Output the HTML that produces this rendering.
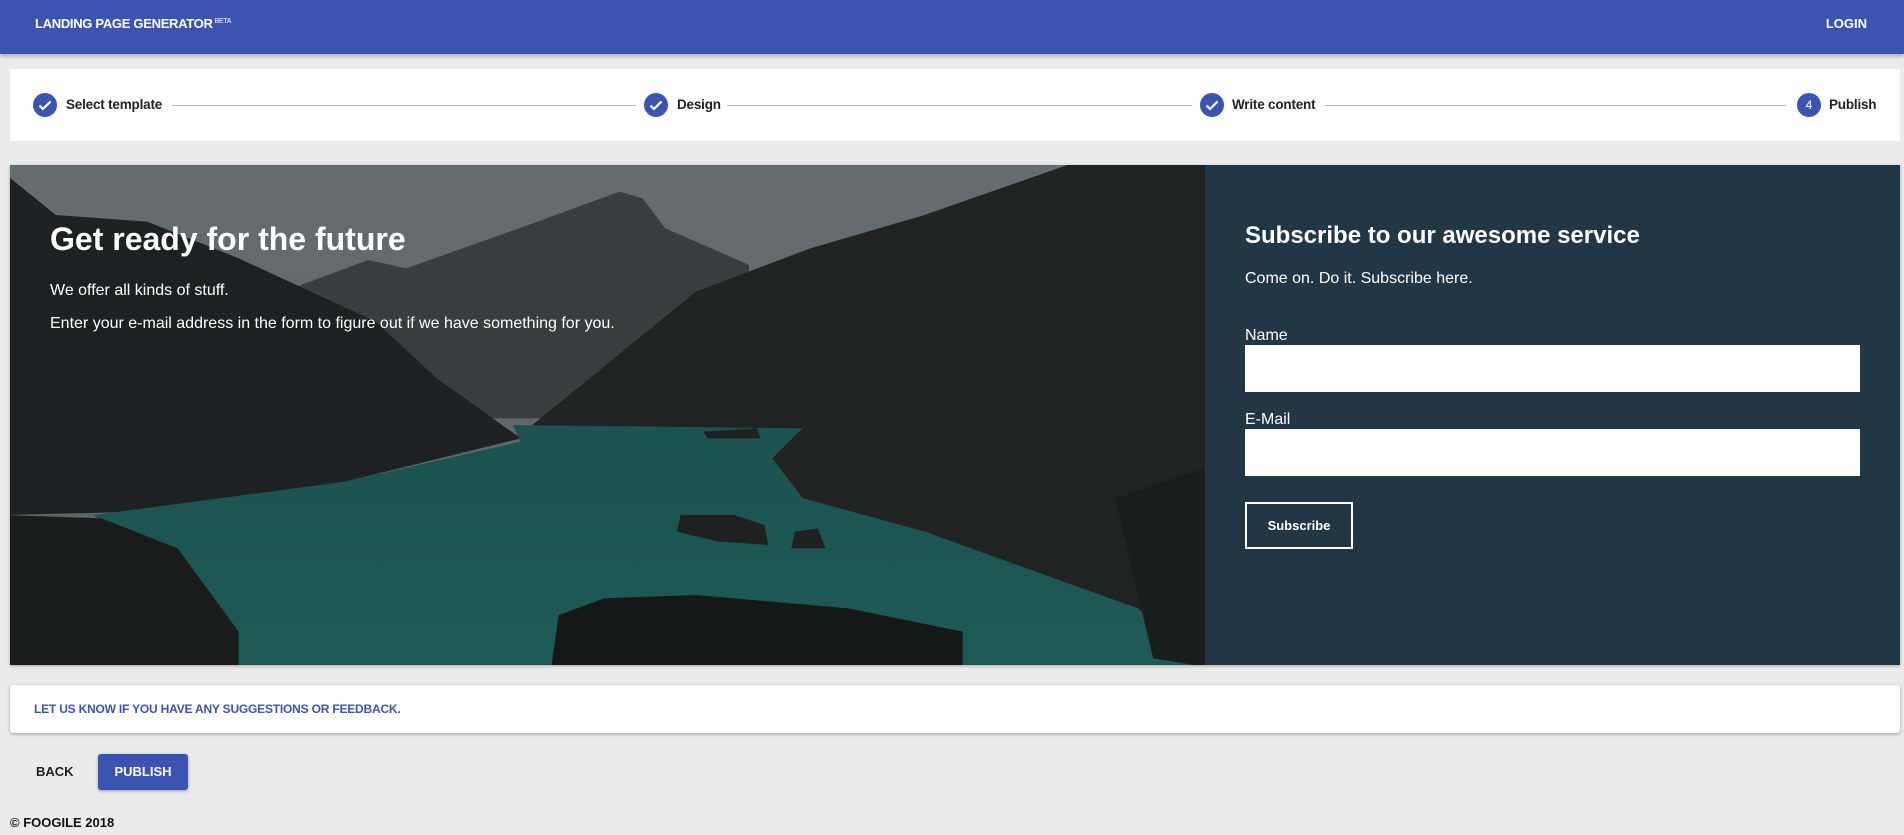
<!DOCTYPE html>
<html><head><meta charset="utf-8">
<style>
*{box-sizing:border-box;margin:0;padding:0}
body{width:1904px;height:835px;background:#ebebeb;font-family:"Liberation Sans",Arial,sans-serif;position:relative;overflow:hidden}
.hdr{position:absolute;left:0;top:0;width:1904px;height:54px;background:#3b54b2;box-shadow:0 2px 4px rgba(0,0,0,.3);color:#fff;font-weight:bold}
.hdr .t{position:absolute;left:35px;top:16px;font-size:13px;letter-spacing:-.3px}
.hdr .t sup{font-size:7px;vertical-align:5px;font-weight:normal;margin-left:2px}
.hdr .l{position:absolute;right:37px;top:16px;font-size:13px}
.card{position:absolute;left:10px;top:69px;width:1890px;height:72px;background:#fff}
.c{position:absolute;top:24px;width:24px;height:24px;border-radius:50%;background:#3b54b2;color:#fff;font-size:12px;text-align:center;line-height:24px}
.lbl{position:absolute;top:28px;font-size:13.5px;color:#222;font-weight:bold;letter-spacing:-.2px}
.ln{position:absolute;top:36px;height:1px;background:#bdbdbd}
.hero{position:absolute;left:10px;top:165px;width:1890px;height:500px;box-shadow:0 1px 3px rgba(0,0,0,.3);overflow:hidden}
.right{position:absolute;left:1195px;top:0;width:695px;height:500px;background:#223746;color:#fff}
.txt{position:absolute;color:#fff}
.inp{position:absolute;left:40px;width:615px;height:47px;background:#fff}
.fb{position:absolute;left:10px;top:685px;width:1890px;height:48px;background:#fff;border-radius:3px;box-shadow:0 1px 3px rgba(0,0,0,.35);color:#3b54b2;font-size:12px;font-weight:bold;padding:17px 0 0 24px;letter-spacing:-.2px}
</style></head><body>
<div class="hdr"><div class="t">LANDING PAGE GENERATOR<sup>BETA</sup></div><div class="l">LOGIN</div></div>
<div class="card">
 <div class="c" style="left:23px"><svg width="24" height="24" viewBox="0 0 24 24"><path d="M6.5 12.5l3.5 3.5 7.5-7.5" stroke="#fff" stroke-width="2.2" fill="none"/></svg></div>
 <div class="lbl" style="left:56px">Select template</div>
 <div class="ln" style="left:162px;width:464px"></div>
 <div class="c" style="left:634px"><svg width="24" height="24" viewBox="0 0 24 24"><path d="M6.5 12.5l3.5 3.5 7.5-7.5" stroke="#fff" stroke-width="2.2" fill="none"/></svg></div>
 <div class="lbl" style="left:667px">Design</div>
 <div class="ln" style="left:717px;width:465px"></div>
 <div class="c" style="left:1190px"><svg width="24" height="24" viewBox="0 0 24 24"><path d="M6.5 12.5l3.5 3.5 7.5-7.5" stroke="#fff" stroke-width="2.2" fill="none"/></svg></div>
 <div class="lbl" style="left:1222px">Write content</div>
 <div class="ln" style="left:1315px;width:461px"></div>
 <div class="c" style="left:1787px">4</div>
 <div class="lbl" style="left:1819px">Publish</div>
</div>
<div class="hero">
 <svg width="1195" height="500" viewBox="0 0 1568 1500" preserveAspectRatio="none" style="position:absolute;left:0;top:0">
  <defs><linearGradient id="sky" x1="0" y1="0" x2="0" y2="1"><stop offset="0" stop-color="#666d71"/><stop offset="1" stop-color="#5a6064"/></linearGradient>
  <linearGradient id="lk" x1="0" y1="0" x2="0" y2="1"><stop offset="0" stop-color="#1c524f"/><stop offset="1" stop-color="#1d5a56"/></linearGradient></defs>
  <rect x="-20" y="-20" width="1610" height="1540" fill="url(#sky)"/>
  <polygon points="370,370 470,285 520,310 680,180 800,80 830,100 860,190 970,300 960,760 600,760" fill="#3a3d3e"/>
  <polygon points="-10,20 60,150 180,170 300,280 480,470 560,640 670,820 440,950 170,1040 -10,1050" fill="#1e2121"/>
  <polygon points="680,790 900,380 1050,250 1200,150 1400,-10 1580,-10 1580,1510 1480,1340 1200,1100 1040,1000 1000,880" fill="#202322"/>
  <polygon points="110,1050 440,950 670,830 660,780 1040,790 1000,880 1040,1000 1200,1100 1480,1330 1568,1510 300,1510" fill="url(#lk)"/>
  <polygon points="-10,1050 120,1060 220,1150 300,1400 300,1510 -10,1510" fill="#1a1c1c"/>
  <polygon points="710,1510 720,1350 780,1300 900,1290 1100,1330 1250,1400 1250,1510" fill="#161818"/>
  <polygon points="880,1050 950,1050 990,1080 995,1140 930,1130 875,1100" fill="#1e2120"/>
  <polygon points="1030,1100 1060,1090 1070,1150 1025,1150" fill="#1e2120"/>
  <polygon points="910,800 980,790 985,820 915,820" fill="#1e2120"/>
  <polygon points="1450,1000 1580,900 1580,1510 1500,1480" fill="#1b1d1d"/>
 </svg>
 <div class="txt" style="left:40px;top:56px;font-size:32px;font-weight:bold">Get ready for the future</div>
 <div class="txt" style="left:40px;top:117px;font-size:16px">We offer all kinds of stuff.</div>
 <div class="txt" style="left:40px;top:150px;font-size:16px">Enter your e-mail address in the form to figure out if we have something for you.</div>
 <div class="right">
  <div class="txt" style="left:40px;top:57px;font-size:24px;font-weight:bold">Subscribe to our awesome service</div>
  <div class="txt" style="left:40px;top:105px;font-size:16px">Come on. Do it. Subscribe here.</div>
  <div class="txt" style="left:40px;top:162px;font-size:16px">Name</div>
  <div class="inp" style="top:180px"></div>
  <div class="txt" style="left:40px;top:246px;font-size:16px">E-Mail</div>
  <div class="inp" style="top:264px"></div>
  <div style="position:absolute;left:40px;top:337px;width:108px;height:47px;border:2px solid #fff;color:#fff;font-size:13px;font-weight:bold;text-align:center;line-height:43px">Subscribe</div>
 </div>
</div>
<div class="fb">LET US KNOW IF YOU HAVE ANY SUGGESTIONS OR FEEDBACK.</div>
<div style="position:absolute;left:36px;top:764px;font-size:13px;font-weight:bold;color:#222">BACK</div>
<div style="position:absolute;left:98px;top:754px;width:90px;height:36px;background:#3b54b2;border-radius:3px;box-shadow:0 1px 3px rgba(0,0,0,.35);color:#fff;font-size:13px;font-weight:bold;text-align:center;line-height:36px">PUBLISH</div>
<div style="position:absolute;left:10px;top:815px;font-size:13px;font-weight:bold;color:#111">© FOOGILE 2018</div>
</body></html>
